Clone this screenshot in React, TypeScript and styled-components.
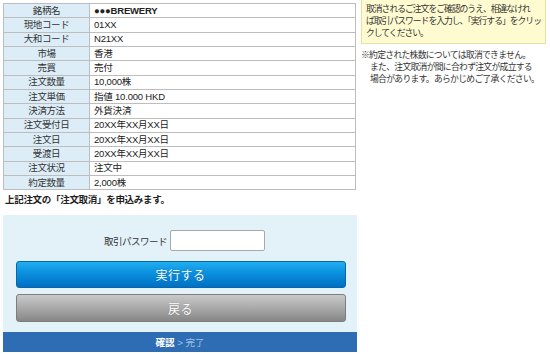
import React from 'react';
import styled, { createGlobalStyle } from 'styled-components';

const FONT = `"Liberation Sans", "Noto Sans CJK JP", sans-serif`;

const GlobalStyle = createGlobalStyle`
  html, body {
    margin: 0;
    padding: 0;
    background: #ffffff;
  }
  body {
    font-family: ${FONT};
    color: #222;
  }
`;

const rows: { label: string; value: string; bold?: boolean }[] = [
  { label: '銘柄名', value: '●●●BREWERY', bold: true },
  { label: '現地コード', value: '01XX' },
  { label: '大和コード', value: 'N21XX' },
  { label: '市場', value: '香港' },
  { label: '売買', value: '売付' },
  { label: '注文数量', value: '10,000株' },
  { label: '注文単価', value: '指値 10.000 HKD' },
  { label: '決済方法', value: '外貨決済' },
  { label: '注文受付日', value: '20XX年XX月XX日' },
  { label: '注文日', value: '20XX年XX月XX日' },
  { label: '受渡日', value: '20XX年XX月XX日' },
  { label: '注文状況', value: '注文中' },
  { label: '約定数量', value: '2,000株' },
];

export default function App() {
  return (
    <>
      <GlobalStyle />
      <Page>
        <Main>
          <OrderTable>
            <tbody>
              {rows.map((r) => (
                <tr key={r.label}>
                  <LabelCell>{r.label}</LabelCell>
                  <ValueCell $bold={r.bold}>{r.value}</ValueCell>
                </tr>
              ))}
            </tbody>
          </OrderTable>
          <Lead>上記注文の「注文取消」を申込みます。</Lead>
          <Panel>
            <PasswordRow>
              <PasswordLabel>取引パスワード</PasswordLabel>
              <PasswordInput type="password" />
            </PasswordRow>
            <Button $variant="primary">実行する</Button>
            <Button $variant="back">戻る</Button>
            <Steps>
              <Step $active>確認</Step>
              <Step>&gt; 完了</Step>
            </Steps>
          </Panel>
        </Main>
        <Side>
          <Notice>
            取消されるご注文をご確認のうえ、相違なけれ
            <br />
            ば取引パスワードを入力し、「実行する」をクリッ
            <br />
            クしてください。
          </Notice>
          <Caution>
            ※約定された株数については取消できません。
            <br />
            また、注文取消が間に合わず注文が成立する
            <br />
            場合があります。あらかじめご了承ください。
          </Caution>
        </Side>
      </Page>
    </>
  );
}

const Page = styled.div`
  width: 550px;
  height: 356px;
  display: flex;
  align-items: flex-start;
  gap: 4px;
  box-sizing: border-box;
  padding: 0 0 0 3px;
  overflow: hidden;
`;

const Main = styled.div`
  width: 354px;
  padding-top: 3px;
  display: flex;
  flex-direction: column;
`;

const OrderTable = styled.table`
  width: 353px;
  border-collapse: collapse;
  table-layout: fixed;
  font-size: 9.5px;

  td {
    border: 1px solid #bdbdbd;
    height: 13.35px;
    padding: 0;
    line-height: 12px;
    white-space: nowrap;
  }
`;

const LabelCell = styled.td`
  width: 85px;
  background: #dcedf7;
  text-align: center;
  color: #333;
  letter-spacing: -0.4px;
`;

const ValueCell = styled.td<{ $bold?: boolean }>`
  padding-left: 4px !important;
  color: #222;
  font-weight: ${(p) => (p.$bold ? 700 : 400)};
  letter-spacing: -0.2px;
`;

const Lead = styled.div`
  margin: 3px 0 0 2px;
  font-size: 9.5px;
  line-height: 14px;
  font-weight: 700;
  color: #222;
  letter-spacing: -0.3px;
`;

const Panel = styled.div`
  margin-top: 8px;
  width: 354px;
  background: #e3f2f9;
  display: flex;
  flex-direction: column;
  align-items: center;
  padding-top: 15px;
  box-sizing: border-box;
`;

const PasswordRow = styled.div`
  display: flex;
  align-items: center;
  gap: 3px;
  margin-left: 9px;
`;

const PasswordLabel = styled.span`
  font-size: 9.5px;
  color: #333;
  letter-spacing: -0.5px;
`;

const PasswordInput = styled.input`
  width: 95px;
  height: 21px;
  box-sizing: border-box;
  border: 1px solid #a9a9a9;
  border-radius: 2px;
  background: #fff;
  padding: 0 3px;
`;

const Button = styled.div<{ $variant: 'primary' | 'back' }>`
  width: 330px;
  height: ${(p) => (p.$variant === 'primary' ? 27 : 28)}px;
  margin-top: ${(p) => (p.$variant === 'primary' ? 10 : 6)}px;
  margin-left: 1px;
  box-sizing: border-box;
  border-radius: 3px;
  display: flex;
  align-items: center;
  justify-content: center;
  color: #fff;
  font-size: 12px;
  letter-spacing: 0.5px;
  border: 1px solid ${(p) => (p.$variant === 'primary' ? '#0a66aa' : '#7d7d7d')};
  background: ${(p) =>
    p.$variant === 'primary'
      ? 'linear-gradient(#21aef0 0%, #0a8fdc 45%, #0070c4 100%)'
      : 'linear-gradient(#c9c9c9 0%, #a9a9a9 50%, #868686 100%)'};
  text-shadow: 0 0 1px rgba(0, 0, 0, 0.25);
`;

const Steps = styled.div`
  margin-top: 10px;
  width: 100%;
  height: 20px;
  background: #2e6db3;
  display: flex;
  align-items: center;
  justify-content: center;
  gap: 3px;
  font-size: 9.5px;
`;

const Step = styled.span<{ $active?: boolean }>`
  color: ${(p) => (p.$active ? '#ffffff' : '#9cc0e6')};
  font-weight: ${(p) => (p.$active ? 700 : 400)};
`;

const Side = styled.div`
  width: 185px;
  display: flex;
  flex-direction: column;
`;

const Notice = styled.div`
  background: #fffbd1;
  border: 1px solid #e6e0a8;
  border-top: none;
  padding: 3px 4px 4px 4px;
  font-size: 8.8px;
  line-height: 12px;
  letter-spacing: -1px;
  color: #333;
  white-space: nowrap;
`;

const Caution = styled.div`
  margin-top: 5px;
  padding-left: 9px;
  text-indent: -9px;
  font-size: 8.8px;
  line-height: 12px;
  letter-spacing: -0.7px;
  color: #333;
  white-space: nowrap;
`;
